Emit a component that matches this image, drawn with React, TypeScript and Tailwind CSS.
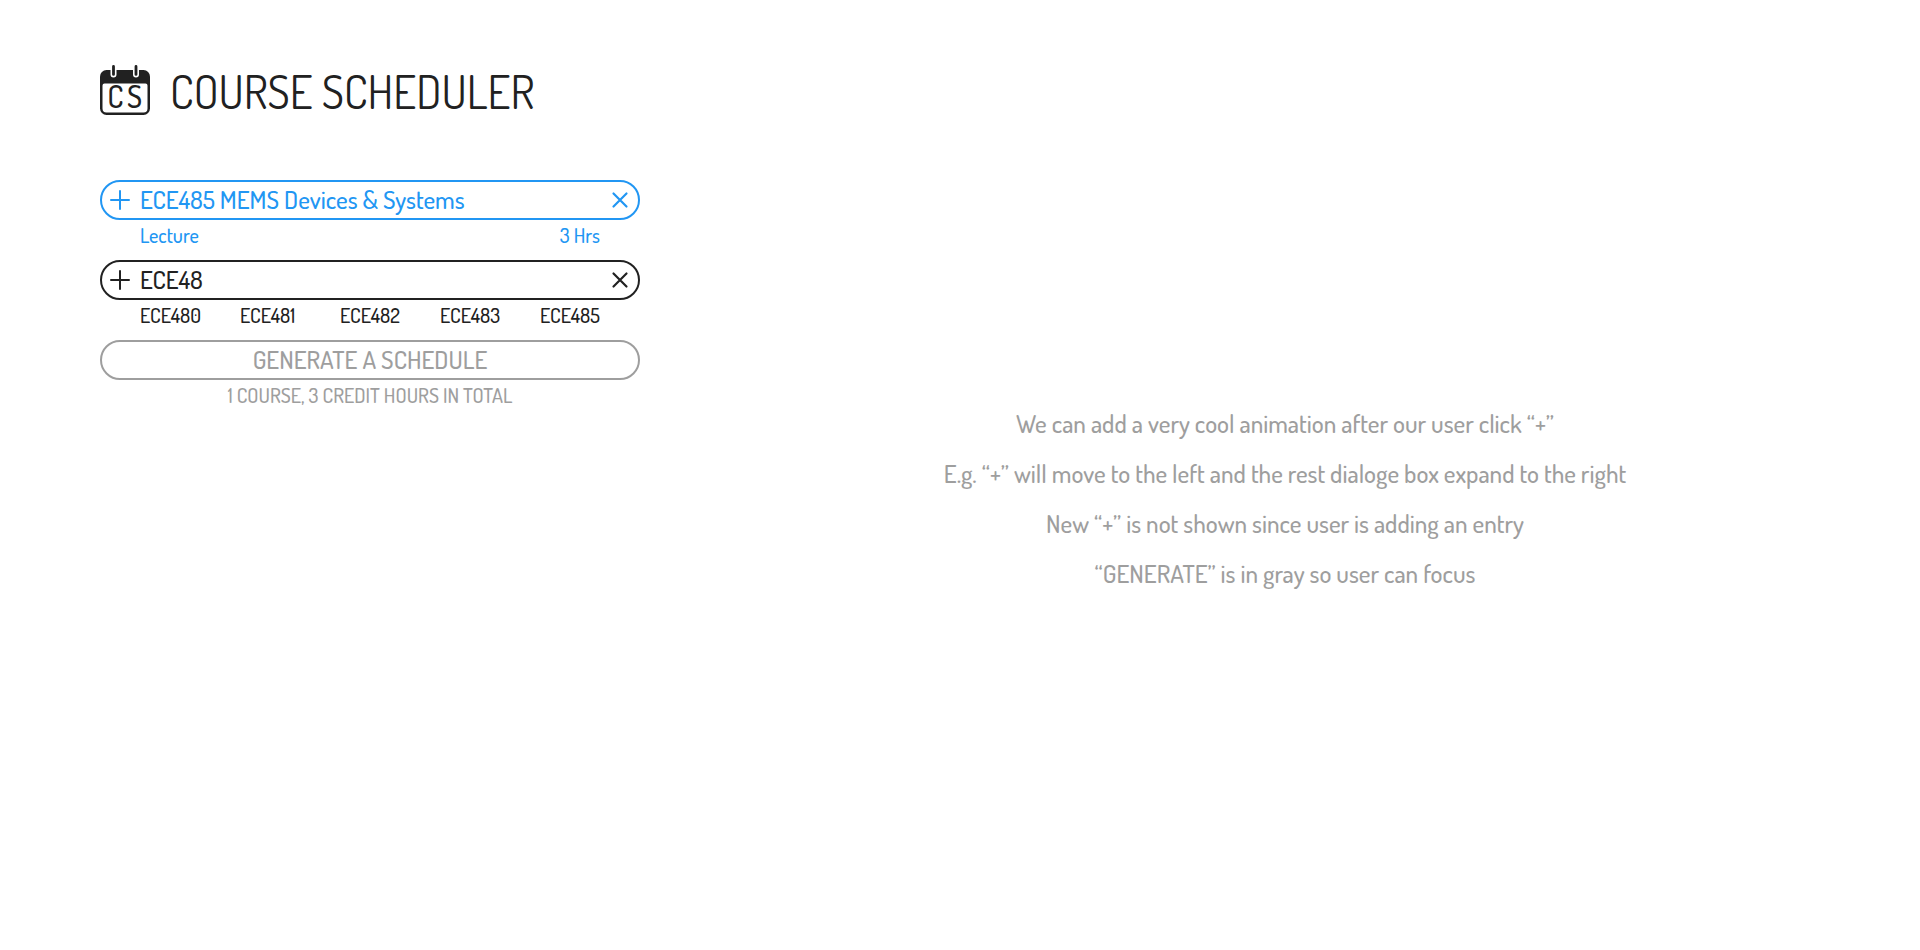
import { useState } from "react";

const suggestions = ["ECE480", "ECE481", "ECE482", "ECE483", "ECE485"];

const notes = [
  "We can add a very cool animation after our user click “+”",
  "E.g. “+” will move to the left and the rest dialoge box expand to the right",
  "New “+” is not shown since user is adding an entry",
  "“GENERATE” is in gray so user can focus",
];

function Logo() {
  return (
    <svg width="50" height="50" viewBox="0 0 50 50" aria-hidden="true" className="shrink-0">
      <rect width="50" height="45" y="5" rx="6.5" fill="#212121" />
      <path d="M4.5 18.5h41a2 2 0 0 1 2 2v23a4 4 0 0 1-4 4h-37a4 4 0 0 1-4-4v-23a2 2 0 0 1 2-2z" fill="white" />
      <path d="M13.5 2v7.6M36 2v7.6" stroke="white" strokeWidth="6" strokeLinecap="round" />
      <path d="M13.5 1.4v8M36 1.4v8" stroke="#212121" strokeWidth="2.8" strokeLinecap="round" />
      <text x="15.5" y="43" fontSize="30" fontWeight="500" textAnchor="middle" fill="#212121">C</text>
      <text x="34.5" y="43" fontSize="30" fontWeight="500" textAnchor="middle" fill="#212121">S</text>
    </svg>
  );
}

function PlusIcon() {
  return (
    <svg width="20" height="20" viewBox="0 0 20 20" fill="none" stroke="currentColor" strokeWidth="2" strokeLinecap="round" aria-hidden="true">
      <path d="M1 10h18M10 1v18" />
    </svg>
  );
}

function CrossIcon() {
  return (
    <svg width="20" height="20" viewBox="0 0 20 20" fill="none" stroke="currentColor" strokeWidth="2.2" strokeLinecap="round" aria-hidden="true">
      <path d="M3.5 3.5l13 13M16.5 3.5l-13 13" />
    </svg>
  );
}

type CourseFieldProps = {
  value: string;
  onChange: (value: string) => void;
};

function CourseField({ value, onChange }: CourseFieldProps) {
  return (
    <div className="flex h-10 items-center gap-2.5 rounded-full border-2 border-current px-2">
      <button type="button" aria-label="Add course">
        <PlusIcon />
      </button>
      <input
        type="text"
        aria-label="Course"
        value={value}
        onChange={(event) => onChange(event.target.value)}
        className="h-full min-w-0 flex-1 bg-transparent pb-0.5 text-[25px] outline-none"
      />
      <button type="button" aria-label="Remove course">
        <CrossIcon />
      </button>
    </div>
  );
}

export default function App() {
  const [course, setCourse] = useState("ECE485 MEMS Devices & Systems");
  const [query, setQuery] = useState("ECE48");

  return (
    <div className="min-h-screen bg-white px-6 pt-[62px] font-[Dosis,'Roboto_Condensed',Roboto,sans-serif] font-medium text-[#212121] lg:pr-0 lg:pl-[100px]">
      <header className="flex items-start gap-5">
        <div className="pt-[3px]">
          <Logo />
        </div>
        <h1 className="text-[45px] leading-[60px] font-normal">COURSE SCHEDULER</h1>
      </header>

      <main className="mt-[58px] grid gap-2.5 lg:grid-cols-[540px_1fr]">
        <form className="flex flex-col" onSubmit={(event) => event.preventDefault()}>
          <section className="text-[#2196f3]">
            <CourseField value={course} onChange={setCourse} />
            <div className="flex h-10 justify-between px-10 text-xl leading-[30px]">
              <span>Lecture</span>
              <span>3 Hrs</span>
            </div>
          </section>

          <section>
            <CourseField value={query} onChange={setQuery} />
            <div className="grid h-10 grid-cols-5 items-start pl-10 text-xl leading-[30px]">
              {suggestions.map((code) => (
                <button key={code} type="button" className="text-left" onClick={() => setQuery(code)}>
                  {code}
                </button>
              ))}
            </div>
          </section>

          <section className="text-center text-[#9e9e9e]">
            <button type="submit" className="block h-10 w-full rounded-full border-2 border-current pb-0.5 text-[25px] leading-[34px]">
              GENERATE A SCHEDULE
            </button>
            <p className="text-xl leading-[30px]">1 COURSE, 3 CREDIT HOURS IN TOTAL</p>
          </section>
        </form>

        <aside className="text-center text-[25px] leading-[50px] text-[#9e9e9e] lg:pt-[218px]">
          {notes.map((note) => (
            <p key={note}>{note}</p>
          ))}
        </aside>
      </main>
    </div>
  );
}
